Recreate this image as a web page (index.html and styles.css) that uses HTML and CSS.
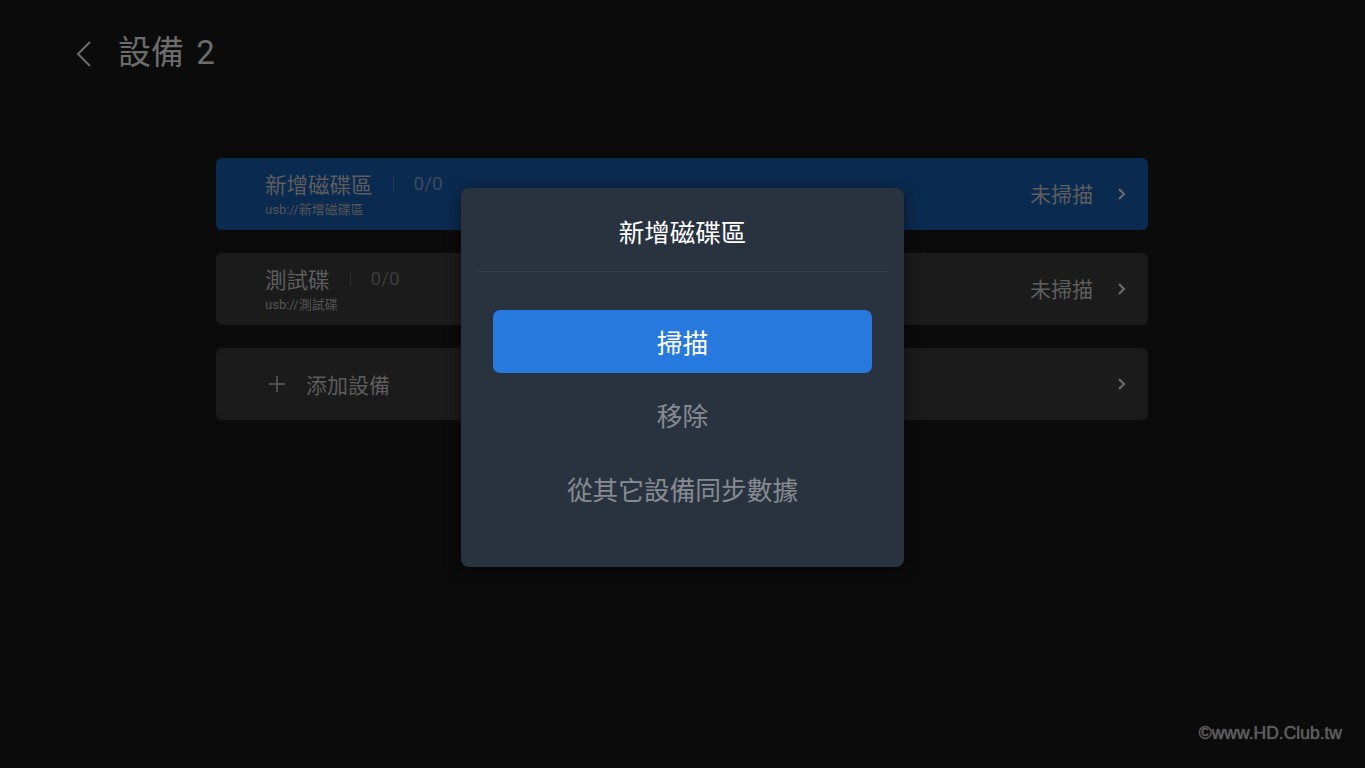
FILE: index.html
```html
<!DOCTYPE html>
<html>
<head>
    <title>設備 2</title>
    <link rel="stylesheet" href="styles.css">
</head>
<body>
    <div class="page">
        <div class="header">
            <svg class="backIcon" width="16" height="26" viewBox="0 0 16 26">
                <path d="M14 1 L2 13 L14 25" fill="none" stroke="#6c6c6c" stroke-width="2"/>
            </svg>
            <h1>設備&nbsp;2</h1>
        </div>

        <div class="deviceList">
            <div class="deviceRow active">
                <div class="deviceInfo">
                    <div class="deviceTop">
                        <span class="deviceName">新增磁碟區</span>
                        <span class="divider"></span>
                        <span class="deviceCount">0/0</span>
                    </div>
                    <div class="devicePath">usb://新增磁碟區</div>
                </div>
                <span class="deviceStatus">未掃描</span>
                <svg class="chevron" width="10" height="14" viewBox="0 0 10 14">
                    <path d="M2 2 L7 7 L2 12" fill="none" stroke="#6a6a6a" stroke-width="2.2"/>
                </svg>
            </div>

            <div class="deviceRow">
                <div class="deviceInfo">
                    <div class="deviceTop">
                        <span class="deviceName">測試碟</span>
                        <span class="divider"></span>
                        <span class="deviceCount">0/0</span>
                    </div>
                    <div class="devicePath">usb://測試碟</div>
                </div>
                <span class="deviceStatus">未掃描</span>
                <svg class="chevron" width="10" height="14" viewBox="0 0 10 14">
                    <path d="M2 2 L7 7 L2 12" fill="none" stroke="#6a6a6a" stroke-width="2.2"/>
                </svg>
            </div>

            <div class="deviceRow addRow">
                <div class="addLabel">
                    <svg class="plusIcon" width="18" height="18" viewBox="0 0 18 18">
                        <path d="M9 1 V17 M1 9 H17" stroke="#5c5c5c" stroke-width="1.6"/>
                    </svg>
                    <span>添加設備</span>
                </div>
                <svg class="chevron" width="10" height="14" viewBox="0 0 10 14">
                    <path d="M2 2 L7 7 L2 12" fill="none" stroke="#6a6a6a" stroke-width="2.2"/>
                </svg>
            </div>
        </div>

        <div class="watermark">©www.HD.Club.tw</div>
    </div>

    <div class="dialog">
        <div class="dialogTitle">新增磁碟區</div>
        <div class="dialogBody">
            <button class="primaryBtn">掃描</button>
            <div class="dialogItem first">移除</div>
            <div class="dialogItem">從其它設備同步數據</div>
        </div>
    </div>
</body>
</html>
```

FILE: styles.css
```css
body {
    margin: 0;
    background-color: #0b0b0b;
    font-family: Roboto, "Noto Sans CJK TC", sans-serif;
    width: 1365px;
    height: 768px;
    overflow: hidden;
    position: relative;
}

.page {
    height: 768px;
    position: relative;
}

.header {
    display: flex;
    align-items: center;
    padding: 34px 0 0 76px;
    height: 38px;
}

.backIcon {
    margin-top: 2px;
}

h1 {
    margin: 0 0 0 26px;
    font-size: 33px;
    font-weight: normal;
    color: #6c6c6c;
    line-height: 38px;
    word-spacing: 4px;
}

.deviceList {
    display: flex;
    flex-direction: column;
    gap: 23px;
    width: 932px;
    margin: 86px 0 0 216px;
}

.deviceRow {
    display: flex;
    align-items: center;
    height: 72px;
    padding: 0 21px 0 49px;
    background-color: #1b1b1b;
    border-radius: 6px;
}

.deviceRow.active {
    background-color: #0b2a4f;
}

.deviceInfo {
    flex: 1;
    display: flex;
    flex-direction: column;
    margin-top: -2px;
}

.deviceTop {
    display: flex;
    align-items: center;
    height: 30px;
}

.deviceName {
    font-size: 21.5px;
    color: #5e5e5e;
}

.divider {
    width: 1px;
    height: 14px;
    margin: 0 20px;
    background-color: #2e3a48;
}

.deviceRow:not(.active) .divider {
    background-color: #2c2c2c;
}

.deviceCount {
    font-size: 19px;
    color: #3b4b5e;
}

.deviceRow:not(.active) .deviceCount {
    color: #3c3c3c;
}

.devicePath {
    font-size: 13px;
    color: #565656;
}

.deviceStatus {
    font-size: 21px;
    color: #5e5e5e;
    margin-right: 24px;
    margin-top: -2px;
}

.addLabel {
    flex: 1;
    display: flex;
    align-items: center;
    gap: 20px;
    font-size: 21px;
    color: #5c5c5c;
    padding-left: 3px;
}

.watermark {
    position: absolute;
    right: 23px;
    bottom: 24px;
    font-family: "Liberation Sans", Arial, sans-serif;
    font-size: 17.5px;
    color: #5a5a5a;
    text-shadow: 0 0 1px #777777;
}

/* dialog overlay */
.dialog {
    position: absolute;
    left: 461px;
    top: 188px;
    width: 443px;
    height: 379px;
    background-color: #29333f;
    border-radius: 8px;
    box-shadow: 0 4px 16px rgba(0, 0, 0, 0.5);
    display: flex;
    flex-direction: column;
}

.dialogTitle {
    margin: 0 16px;
    padding: 28px 0 21px;
    line-height: 34px;
    font-size: 25.5px;
    color: #ffffff;
    text-align: center;
    border-bottom: 1px solid #333e4b;
}

.dialogBody {
    display: flex;
    flex-direction: column;
    align-items: center;
    padding: 38px 32px 0;
}

.primaryBtn {
    width: 100%;
    height: 63px;
    border: none;
    border-radius: 7px;
    background-color: #2779dd;
    color: #ffffff;
    font-family: Roboto, "Noto Sans CJK TC", sans-serif;
    font-size: 25.7px;
}

.dialogItem {
    margin-top: 40px;
    line-height: 34px;
    font-size: 25.7px;
    color: #878b91;
}

.dialogItem.first {
    margin-top: 27px;
}
```
